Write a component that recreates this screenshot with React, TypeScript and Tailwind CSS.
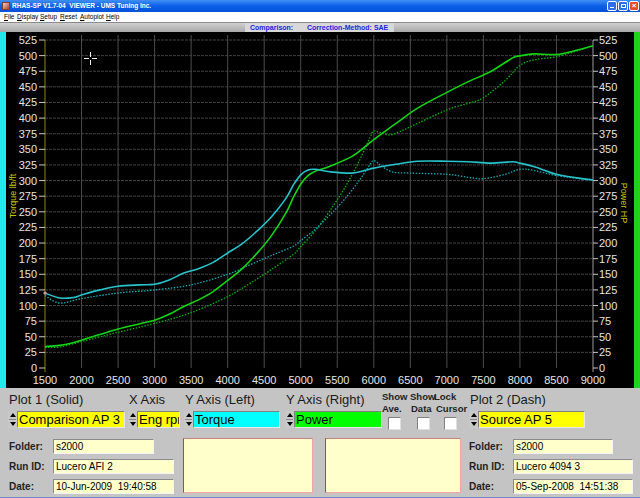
import React from "react";

// plot geometry in page pixels
const X0 = 45;
const X1 = 593;
const Y0 = 368;
const PX_PER_UNIT = (368 - 40) / 525;

const xOf = (rpm: number) => X0 + ((rpm - 1500) * (X1 - X0)) / 7500;
const yOf = (v: number) => Y0 - v * PX_PER_UNIT;

type Pt = [number, number];

// torque, lb/ft — plot 1 (solid)
const torque1: Pt[] = [
  [1500, 120], [1700, 112], [1900, 113], [2000, 117], [2250, 125], [2500, 131],
  [2800, 133], [3000, 134], [3200, 141], [3400, 152], [3600, 159], [3800, 169],
  [4000, 184], [4200, 199], [4400, 219], [4600, 242], [4800, 272], [4900, 293],
  [5000, 309], [5100, 317], [5200, 318], [5400, 314], [5700, 312], [5900, 317],
  [6000, 320], [6300, 326], [6600, 331], [7000, 331], [7300, 330], [7600, 328],
  [7900, 330], [8000, 328], [8200, 322], [8500, 310], [8800, 304], [9000, 301],
];

// torque, lb/ft — plot 2 (dash)
const torque2: Pt[] = [
  [1500, 116], [1700, 104], [2000, 111], [2500, 120], [3000, 125], [3500, 133],
  [4000, 150], [4300, 165], [4600, 180], [4900, 195], [5000, 204], [5200, 222],
  [5400, 245], [5600, 270], [5800, 300], [5950, 326], [6000, 332], [6100, 324],
  [6250, 314], [6500, 312], [7000, 310], [7300, 305], [7500, 303], [7800, 310],
  [8000, 318], [8200, 316], [8500, 308], [8900, 302],
];

const toPower = (pts: Pt[]): Pt[] => pts.map(([r, t]) => [r, (t * r) / 5252]);

function smoothPath(data: Pt[]) {
  const pts = data.map(([r, v]) => [xOf(r), yOf(v)] as Pt);
  const f = (n: number) => n.toFixed(1);
  let d = `M${f(pts[0][0])},${f(pts[0][1])}`;
  for (let i = 0; i < pts.length - 1; i++) {
    const p0 = pts[i - 1] ?? pts[i];
    const p1 = pts[i];
    const p2 = pts[i + 1];
    const p3 = pts[i + 2] ?? p2;
    const c1x = p1[0] + (p2[0] - p0[0]) / 6;
    const c1y = p1[1] + (p2[1] - p0[1]) / 6;
    const c2x = p2[0] - (p3[0] - p1[0]) / 6;
    const c2y = p2[1] - (p3[1] - p1[1]) / 6;
    d += ` C${f(c1x)},${f(c1y)} ${f(c2x)},${f(c2y)} ${f(p2[0])},${f(p2[1])}`;
  }
  return d;
}

const yTicks = Array.from({ length: 22 }, (_, i) => i * 25);
const xTicks = Array.from({ length: 16 }, (_, i) => 1500 + i * 500);

function Chart() {
  return (
    <svg
      className="block flex-1 h-full"
      viewBox="6 32 628 356"
      style={{ fontFamily: '"Liberation Sans", Arial, sans-serif' }}
    >
      <rect x="6" y="32" width="628" height="356" fill="#000" />

      {/* grid */}
      {yTicks.slice(1).map((v) => (
        <line key={v} x1={X0} x2={X1} y1={yOf(v)} y2={yOf(v)} stroke="#404040" strokeWidth="1" strokeDasharray="3 1" />
      ))}
      {xTicks.slice(1, -1).map((r) => (
        <line key={r} x1={xOf(r)} x2={xOf(r)} y1="35" y2={Y0} stroke="#4c4c4c" strokeWidth="1" />
      ))}

      {/* axes */}
      <line x1={X0} x2={X0} y1="40" y2={Y0 + 4} stroke="#8a8a00" strokeWidth="1" />
      <line x1={X1} x2={X1} y1="40" y2={Y0 + 4} stroke="#9a9a9a" strokeWidth="1" />
      {yTicks.map((v) => (
        <g key={v}>
          <line x1="39" x2={X0} y1={yOf(v)} y2={yOf(v)} stroke="#c8c8c8" />
          <line x1={X1} x2="598" y1={yOf(v)} y2={yOf(v)} stroke="#c8c8c8" />
          <text x="37" y={yOf(v) + 4} fontSize="11" fill="#e6e6e6" textAnchor="end">{v}</text>
          <text x="599" y={yOf(v) + 4} fontSize="11" fill="#e6e6e6">{v}</text>
        </g>
      ))}
      {xTicks.map((r) => (
        <text key={r} x={xOf(r)} y="384" fontSize="11" fill="#e6e6e6" textAnchor="middle">{r}</text>
      ))}

      <text x="0" y="0" fontSize="9" fill="#c8c800" textAnchor="middle" transform="translate(16 196) rotate(-90)">
        Torque lb/ft
      </text>
      <text x="0" y="0" fontSize="9" fill="#c8c800" textAnchor="middle" transform="translate(621 203) rotate(90)">
        Power HP
      </text>

      {/* plot 2, dashed */}
      <path d={smoothPath(toPower(torque2))} fill="none" stroke="#00b400" strokeWidth="1.3" strokeDasharray="1.5 1.5" />
      <path d={smoothPath(torque2)} fill="none" stroke="#10a8b4" strokeWidth="1.3" strokeDasharray="1.5 1.5" />

      {/* plot 1, solid */}
      <path d={smoothPath(toPower(torque1))} fill="none" stroke="#12d612" strokeWidth="1.6" />
      <path d={smoothPath(torque1)} fill="none" stroke="#26c4cc" strokeWidth="1.6" />
      <circle cx={X0} cy={yOf(120)} r="1.6" fill="#e09090" />

      {/* cursor */}
      <g stroke="#f0f0f0" strokeWidth="1">
        <line x1="84" x2="89" y1="58.5" y2="58.5" />
        <line x1="92" x2="97" y1="58.5" y2="58.5" />
        <line x1="90.5" x2="90.5" y1="52" y2="57" />
        <line x1="90.5" x2="90.5" y1="60" y2="65" />
      </g>
    </svg>
  );
}

function Spinner() {
  return (
    <div className="w-[9px] h-full flex flex-col items-center justify-center gap-[2px] bg-[#c8c8c8]">
      <div className="w-0 h-0 border-x-[3px] border-x-transparent border-b-[4px] border-b-black" />
      <div className="w-[7px] h-px bg-[#888]" />
      <div className="w-0 h-0 border-x-[3px] border-x-transparent border-t-[4px] border-t-black" />
    </div>
  );
}

function Combo({ text, bg, width }: { text: string; bg: string; width: string }) {
  return (
    <div className="flex h-[17px]">
      <Spinner />
      <div
        className={`${bg} ${width} h-full overflow-hidden whitespace-nowrap border border-t-[#808080] border-l-[#808080] border-b-[#e8e8e8] border-r-[#e8e8e8] pl-[1px] text-[13px] leading-[15px] text-black`}
      >
        {text}
      </div>
    </div>
  );
}

function Field({ label, value, width }: { label: string; value: string; width: string }) {
  return (
    <div className="flex items-center h-[15px]">
      <div className="w-[44px] text-[10px] font-bold text-[#222]">{label}</div>
      <div
        className={`${width} h-full bg-[#ffffcc] border border-t-[#8a8a8a] border-l-[#8a8a8a] border-b-[#f4f4f4] border-r-[#f4f4f4] pl-[2px] text-[10px] leading-[13px] text-black whitespace-pre overflow-hidden`}
      >
        {value}
      </div>
    </div>
  );
}

function CheckCol({ top, bottom, width, indent, boxMl }: { top: string; bottom: string; width: string; indent: string; boxMl: string }) {
  return (
    <div className={`${width} flex flex-col whitespace-nowrap text-[9.5px] font-bold leading-[12px] text-[#222]`}>
      <div>{top}</div>
      <div className={indent}>{bottom}</div>
      <div className={`${boxMl} mt-[2px] w-[13px] h-[13px] bg-white border border-t-[#808080] border-l-[#808080] border-b-[#e0e0e0] border-r-[#e0e0e0]`} />
    </div>
  );
}

export default function App() {
  return (
    <div
      className="w-[640px] h-[498px] flex flex-col overflow-hidden bg-[#c4c4c4]"
      style={{ fontFamily: '"Liberation Sans", Arial, sans-serif' }}
    >
      {/* title bar */}
      <div className="h-[12px] flex items-center bg-gradient-to-b from-[#3f8ef6] via-[#0a5fe8] to-[#0652da]">
        <div className="ml-[2px] w-[8px] h-[8px] bg-gradient-to-br from-[#f0d0c0] to-[#b04020] border border-[#804030]" />
        <div className="ml-[2px] text-[6.5px] font-bold text-white leading-none whitespace-nowrap">
          RHAS-SP V1.7-04&nbsp; VIEWER - UMS Tuning Inc.
        </div>
        <div className="ml-auto flex gap-[1px] pr-[1px]">
          <div className="w-[10px] h-[10px] rounded-[2px] border border-white bg-[#2f6ee8] flex items-end justify-center pb-[2px]">
            <div className="w-[4px] h-[1px] bg-white" />
          </div>
          <div className="w-[10px] h-[10px] rounded-[2px] border border-white bg-[#2f6ee8] flex items-center justify-center">
            <div className="w-[5px] h-[4px] border border-white" />
          </div>
          <div className="w-[10px] h-[10px] rounded-[2px] border border-white bg-[#e0512a] flex items-center justify-center text-[8px] leading-none font-bold text-white">
            ×
          </div>
        </div>
      </div>

      {/* menu */}
      <div className="h-[10px] bg-white flex items-center pl-[4px] text-[6.5px] leading-none text-black">
        <span className="w-[13px]"><u>F</u>ile</span>
        <span className="w-[23px]"><u>D</u>isplay</span>
        <span className="w-[20px]"><u>S</u>etup</span>
        <span className="w-[20px]"><u>R</u>eset</span>
        <span className="w-[26px]"><u>A</u>utoplot</span>
        <span><u>H</u>elp</span>
      </div>

      {/* comparison strip */}
      <div className="h-[10px] flex border-t border-t-[#8a8a8a] bg-gradient-to-b from-[#d0d0d0] to-[#a8a8a8]">
        <div className="ml-[245px] w-[149px] bg-[#d8d8d8] flex items-center text-[7px] font-bold text-[#1c1ce0] leading-none">
          <span className="ml-[5px] w-[57px]">Comparison:</span>
          <span>Correction-Method: SAE</span>
        </div>
      </div>

      {/* chart */}
      <div className="h-[356px] flex bg-black">
        <div className="w-[6px] h-full bg-[#1ee8f0]" />
        <Chart />
        <div className="w-[6px] h-full bg-[#1ed21e]" />
      </div>

      {/* controls */}
      <div className="flex-1 flex flex-col border-b border-b-[#6f8fcf]">
        <div className="flex pl-[8px] pt-[3px]">
          <div className="w-[120px]">
            <div className="h-[18px] pl-[1px] text-[13px] leading-[18px] text-[#1a1a1a]">Plot 1 (Solid)</div>
            <div className="mt-[2px]"><Combo text="Comparison AP 3" bg="bg-[#ffff00]" width="w-[108px]" /></div>
          </div>
          <div className="w-[56px]">
            <div className="h-[18px] pl-[1px] text-[13px] leading-[18px] text-[#1a1a1a]">X Axis</div>
            <div className="mt-[2px]"><Combo text="Eng rpm" bg="bg-[#ffff00]" width="w-[43px]" /></div>
          </div>
          <div className="w-[101px]">
            <div className="h-[18px] pl-[1px] text-[13px] leading-[18px] text-[#1a1a1a]">Y Axis (Left)</div>
            <div className="mt-[2px]"><Combo text="Torque" bg="bg-[#00ffff]" width="w-[87px]" /></div>
          </div>
          <div className="w-[97px]">
            <div className="h-[18px] pl-[1px] text-[13px] leading-[18px] text-[#1a1a1a] whitespace-nowrap">Y Axis (Right)</div>
            <div className="mt-[2px]"><Combo text="Power" bg="bg-[#00ff00]" width="w-[88px]" /></div>
          </div>
          <CheckCol top="Show" bottom="Ave." width="w-[28px]" indent="" boxMl="ml-[6px]" />
          <CheckCol top="Show" bottom="Data" width="w-[24px]" indent="pl-[1px]" boxMl="ml-[7px]" />
          <CheckCol top="Lock" bottom="Cursor" width="w-[35px]" indent="pl-[2px]" boxMl="ml-[10px]" />
          <div className="w-[116px]">
            <div className="h-[18px] pl-[1px] text-[13px] leading-[18px] text-[#1a1a1a]">Plot 2 (Dash)</div>
            <div className="mt-[2px]"><Combo text="Source AP 5" bg="bg-[#ffff00]" width="w-[107px]" /></div>
          </div>
        </div>

        <div className="flex pl-[9px] mt-[8px]">
          <div className="w-[174px] flex flex-col gap-[5px] pt-[1px]">
            <Field label="Folder:" value="s2000" width="w-[101px]" />
            <Field label="Run ID:" value="Lucero AFI 2" width="w-[121px]" />
            <Field label="Date:" value="10-Jun-2009  19:40:58" width="w-[121px]" />
          </div>
          <div className="w-[130px] h-[55px] bg-[#ffffcc] border border-t-[#c88080] border-l-[#9a5050] border-b-[#f4a4a4] border-r-[#f4a4a4]" />
          <div className="ml-[12px] w-[136px] h-[55px] bg-[#ffffcc] border border-t-[#c88080] border-l-[#9a5050] border-b-[#f4a4a4] border-r-[#f4a4a4]" />
          <div className="ml-[8px] flex flex-col gap-[5px] pt-[1px]">
            <Field label="Folder:" value="s2000" width="w-[100px]" />
            <Field label="Run ID:" value="Lucero 4094 3" width="w-[120px]" />
            <Field label="Date:" value="05-Sep-2008  14:51:38" width="w-[120px]" />
          </div>
        </div>
      </div>
    </div>
  );
}
